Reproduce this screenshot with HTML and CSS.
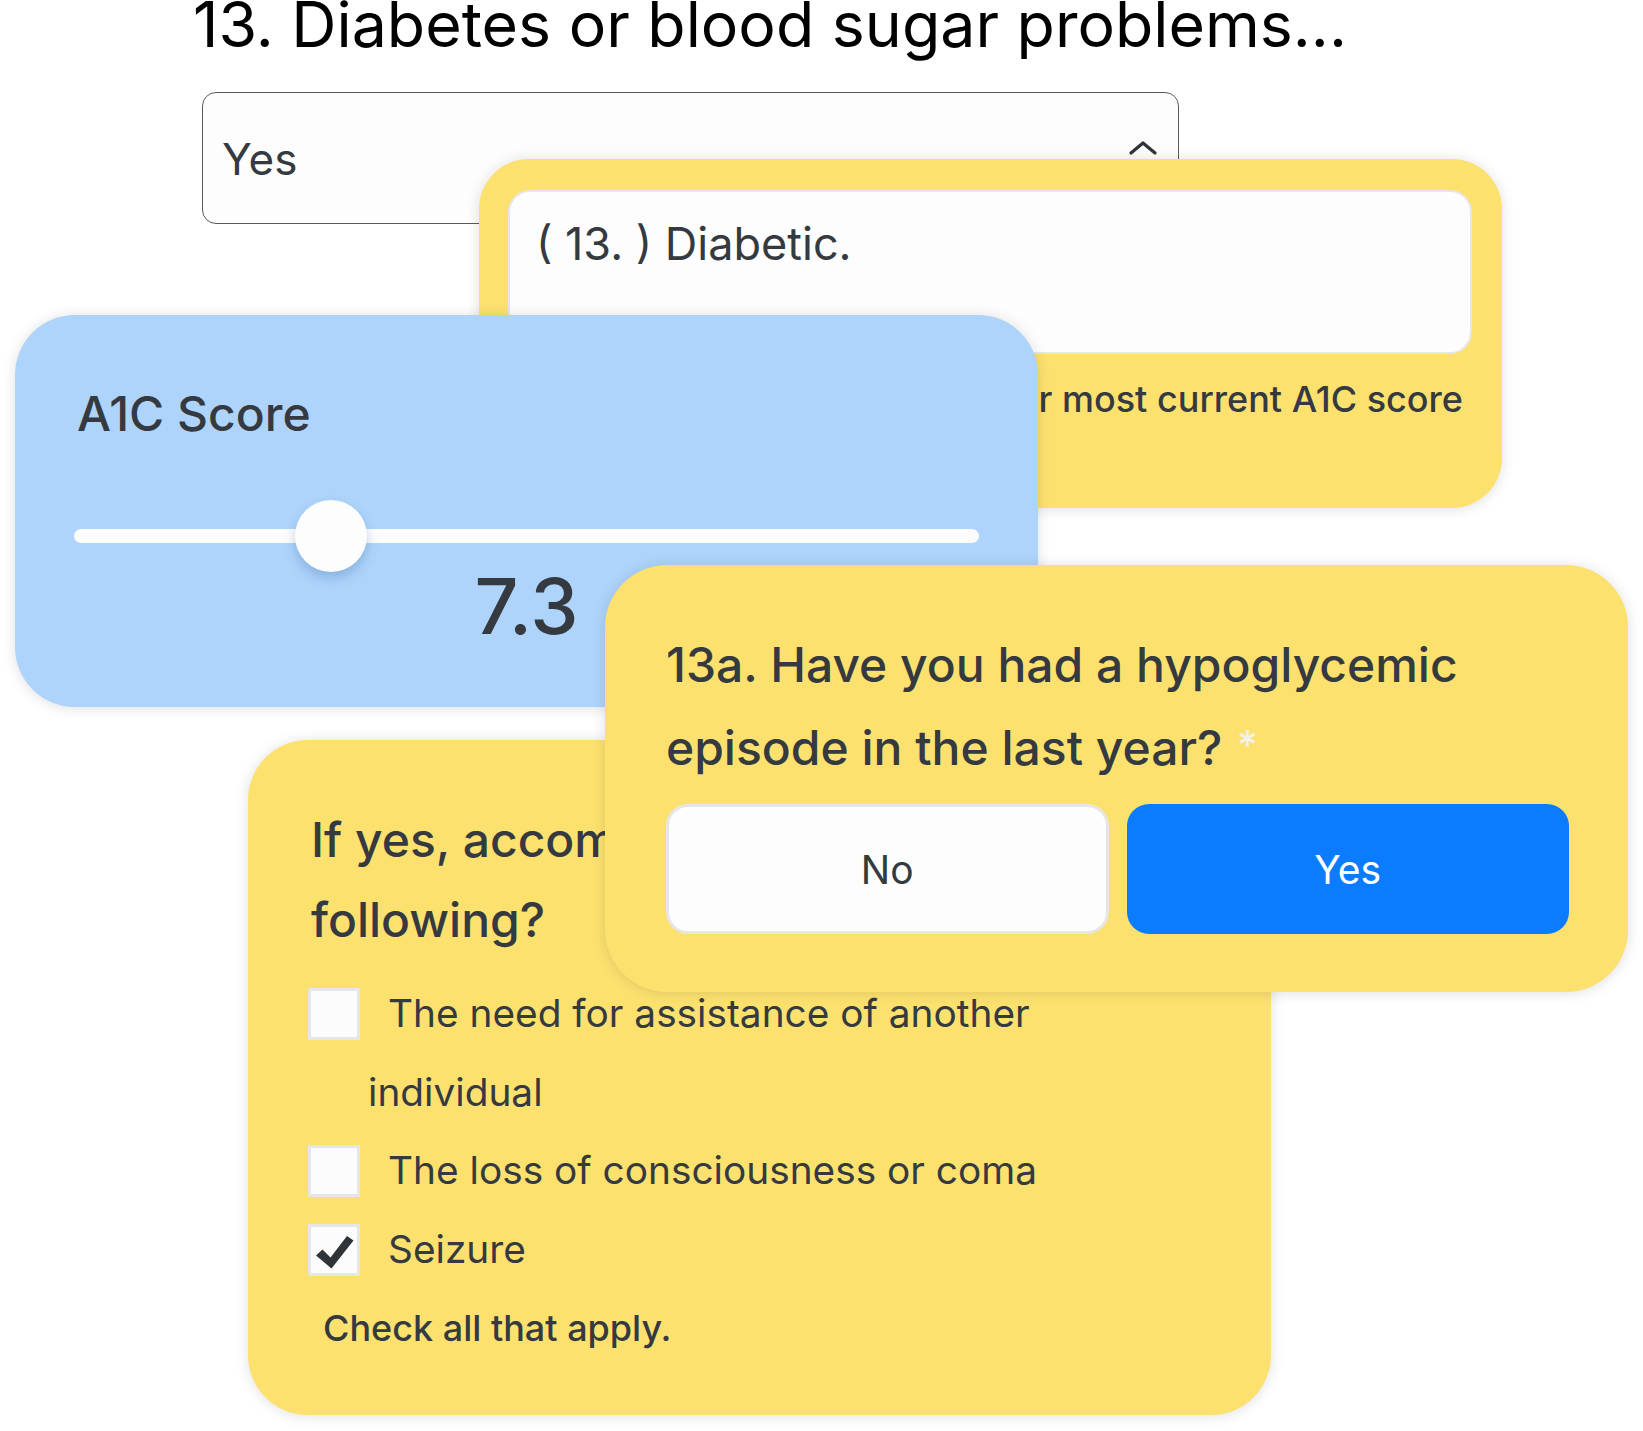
FILE: index.html
```html
<!DOCTYPE html>
<html lang="en">
<head>
<meta charset="utf-8">
<title>Diabetes questionnaire</title>
<link rel="stylesheet" href="styles.css">
</head>
<body>
<main class="canvas">
  <h1 class="title">13. Diabetes or blood sugar problems...</h1>

  <div class="select">
    <span class="select-value">Yes</span>
    <svg class="chevron" width="30" height="16" viewBox="0 0 30 16" aria-hidden="true">
      <polyline points="3,13 15,3 27,13" fill="none" stroke="#2f3337" stroke-width="3.2" stroke-linecap="round" stroke-linejoin="round"/>
    </svg>
  </div>

  <section class="card card-diabetic">
    <div class="textbox">( 13. ) Diabetic.</div>
    <p class="hint">Please enter your most current A1C score</p>
  </section>

  <section class="card card-a1c">
    <div class="a1c-label">A1C Score</div>
    <div class="slider">
      <div class="track"></div>
      <div class="thumb" style="left: 221px"></div>
    </div>
    <div class="a1c-value">7.3</div>
  </section>

  <section class="card card-accomp">
    <h2 class="question q-accomp">If yes, accompanied by any of the following?</h2>
    <div class="checks">
      <label class="check-row"><span class="box"></span>The need for assistance of another individual</label>
      <label class="check-row"><span class="box"></span>The loss of consciousness or coma</label>
      <label class="check-row"><span class="box checked"><svg width="46" height="46" viewBox="0 0 46 46" aria-hidden="true"><path d="M5 28.5 L11.5 22.5 L19.5 30.5 L36 9 L42.5 13.5 L20.5 41.5 Z" fill="#2f3438"/></svg></span>Seizure</label>
    </div>
    <p class="check-help">Check all that apply.</p>
  </section>

  <section class="card card-episode">
    <h2 class="question q-episode">13a. Have you had a hypoglycemic episode in the last year? <span class="req">*</span></h2>
    <div class="choices">
      <button class="choice choice-no" type="button">No</button>
      <button class="choice choice-yes" type="button">Yes</button>
    </div>
  </section>
</main>
</body>
</html>
```

FILE: styles.css
```css
html, body {
  margin: 0;
  padding: 0;
  background: #ffffff;
}

body {
  font-family: Inter, "Noto Sans", "Liberation Sans", sans-serif;
  color: #343a40;
}

.canvas {
  position: relative;
  width: 1643px;
  height: 1431px;
  overflow: hidden;
}

.title {
  position: absolute;
  left: 193px;
  top: -7px;
  margin: 0;
  font-size: 62.6px;
  line-height: 1;
  font-weight: 400;
  color: #000000;
  white-space: nowrap;
}

.select {
  position: absolute;
  left: 202px;
  top: 92px;
  width: 977px;
  height: 132px;
  box-sizing: border-box;
  border: 1px solid #555a5e;
  border-radius: 14px;
  background: #fdfdfd;
  display: flex;
  align-items: center;
  justify-content: space-between;
  padding: 0 20px 0 19px;
}

.select-value {
  font-size: 44px;
  line-height: 1.2;
  margin-top: 2px;
}

.chevron {
  align-self: flex-start;
  margin-top: 47px;
}

.card {
  position: absolute;
  box-sizing: border-box;
  width: 1023px;
  background: #fde16f;
  box-shadow: 0 1px 14px rgba(0, 0, 0, 0.13);
}

.card-diabetic {
  left: 479px;
  top: 159px;
  height: 349px;
  border-radius: 50px;
  padding: 31px 30px 0 29px;
}

.textbox {
  height: 164px;
  box-sizing: border-box;
  border: 2px solid #e6e6e6;
  border-radius: 22px;
  background: #fdfdfd;
  padding: 25px 26px 0 26px;
  font-size: 45px;
  line-height: 1.2;
}

.hint {
  margin: 18px 9px 0 0;
  text-align: right;
  font-size: 36px;
  line-height: 1.5;
  font-weight: 500;
}

.card-a1c {
  left: 15px;
  top: 315px;
  height: 392px;
  border-radius: 60px;
  background: #aed4fb;
  padding: 70px 59px 0 59px;
}

.a1c-label {
  font-size: 48px;
  line-height: 1.2;
  font-weight: 500;
  padding-left: 3px;
}

.slider {
  position: relative;
  height: 72px;
  margin-top: 57px;
  display: flex;
  align-items: center;
}

.track {
  flex: 1;
  height: 14px;
  border-radius: 7px;
  background: #fcfcfc;
}

.thumb {
  position: absolute;
  top: 0;
  width: 72px;
  height: 72px;
  border-radius: 50%;
  background: #fdfdfd;
  box-shadow: 0 6px 12px rgba(40, 90, 150, 0.28);
}

.a1c-value {
  margin-top: -4px;
  text-align: center;
  font-size: 77px;
  line-height: 1;
  font-weight: 500;
}

.card-episode {
  left: 605px;
  top: 565px;
  height: 427px;
  border-radius: 62px;
  padding: 60px 59px 0 61px;
}

.question {
  margin: 0;
  font-weight: 500;
  font-size: 48px;
  line-height: 80px;
}

.req {
  color: #f3f1ea;
  font-size: 40px;
  vertical-align: 6px;
  margin-left: 2px;
}

.choices {
  margin-top: 16px;
  display: grid;
  grid-template-columns: 1fr 1fr;
  gap: 18px;
}

.choice {
  height: 130px;
  border-radius: 22px;
  font-family: Inter, "Noto Sans", "Liberation Sans", sans-serif;
  font-size: 39px;
  font-weight: 400;
  padding: 0;
  cursor: pointer;
}

.choice-no {
  background: #fdfdfd;
  border: 3px solid #e6e6e6;
  color: #343a40;
}

.choice-yes {
  background: #0b7bff;
  border: 0;
  color: #ffffff;
}

.card-accomp {
  left: 248px;
  top: 740px;
  height: 675px;
  border-radius: 60px;
  padding: 60px 40px 0 60px;
}

.q-accomp {
  padding-left: 3px;
  padding-right: 20px;
}

.checks {
  margin-top: 14px;
  max-width: 792px;
  display: flex;
  flex-direction: column;
}

.check-row {
  display: block;
  padding-left: 60px;
  font-size: 38.8px;
  line-height: 78.6px;
}

.box {
  display: inline-block;
  box-sizing: border-box;
  width: 52px;
  height: 52px;
  margin-left: -60px;
  margin-right: 28px;
  vertical-align: -13px;
  border: 3px solid #e6e6e6;
  background: #fcfcfc;
  position: relative;
}

.box svg {
  position: absolute;
  left: 0;
  top: 0;
}

.check-help {
  margin: 13px 0 0 15px;
  font-size: 36px;
  line-height: 1.5;
  font-weight: 500;
}
```
